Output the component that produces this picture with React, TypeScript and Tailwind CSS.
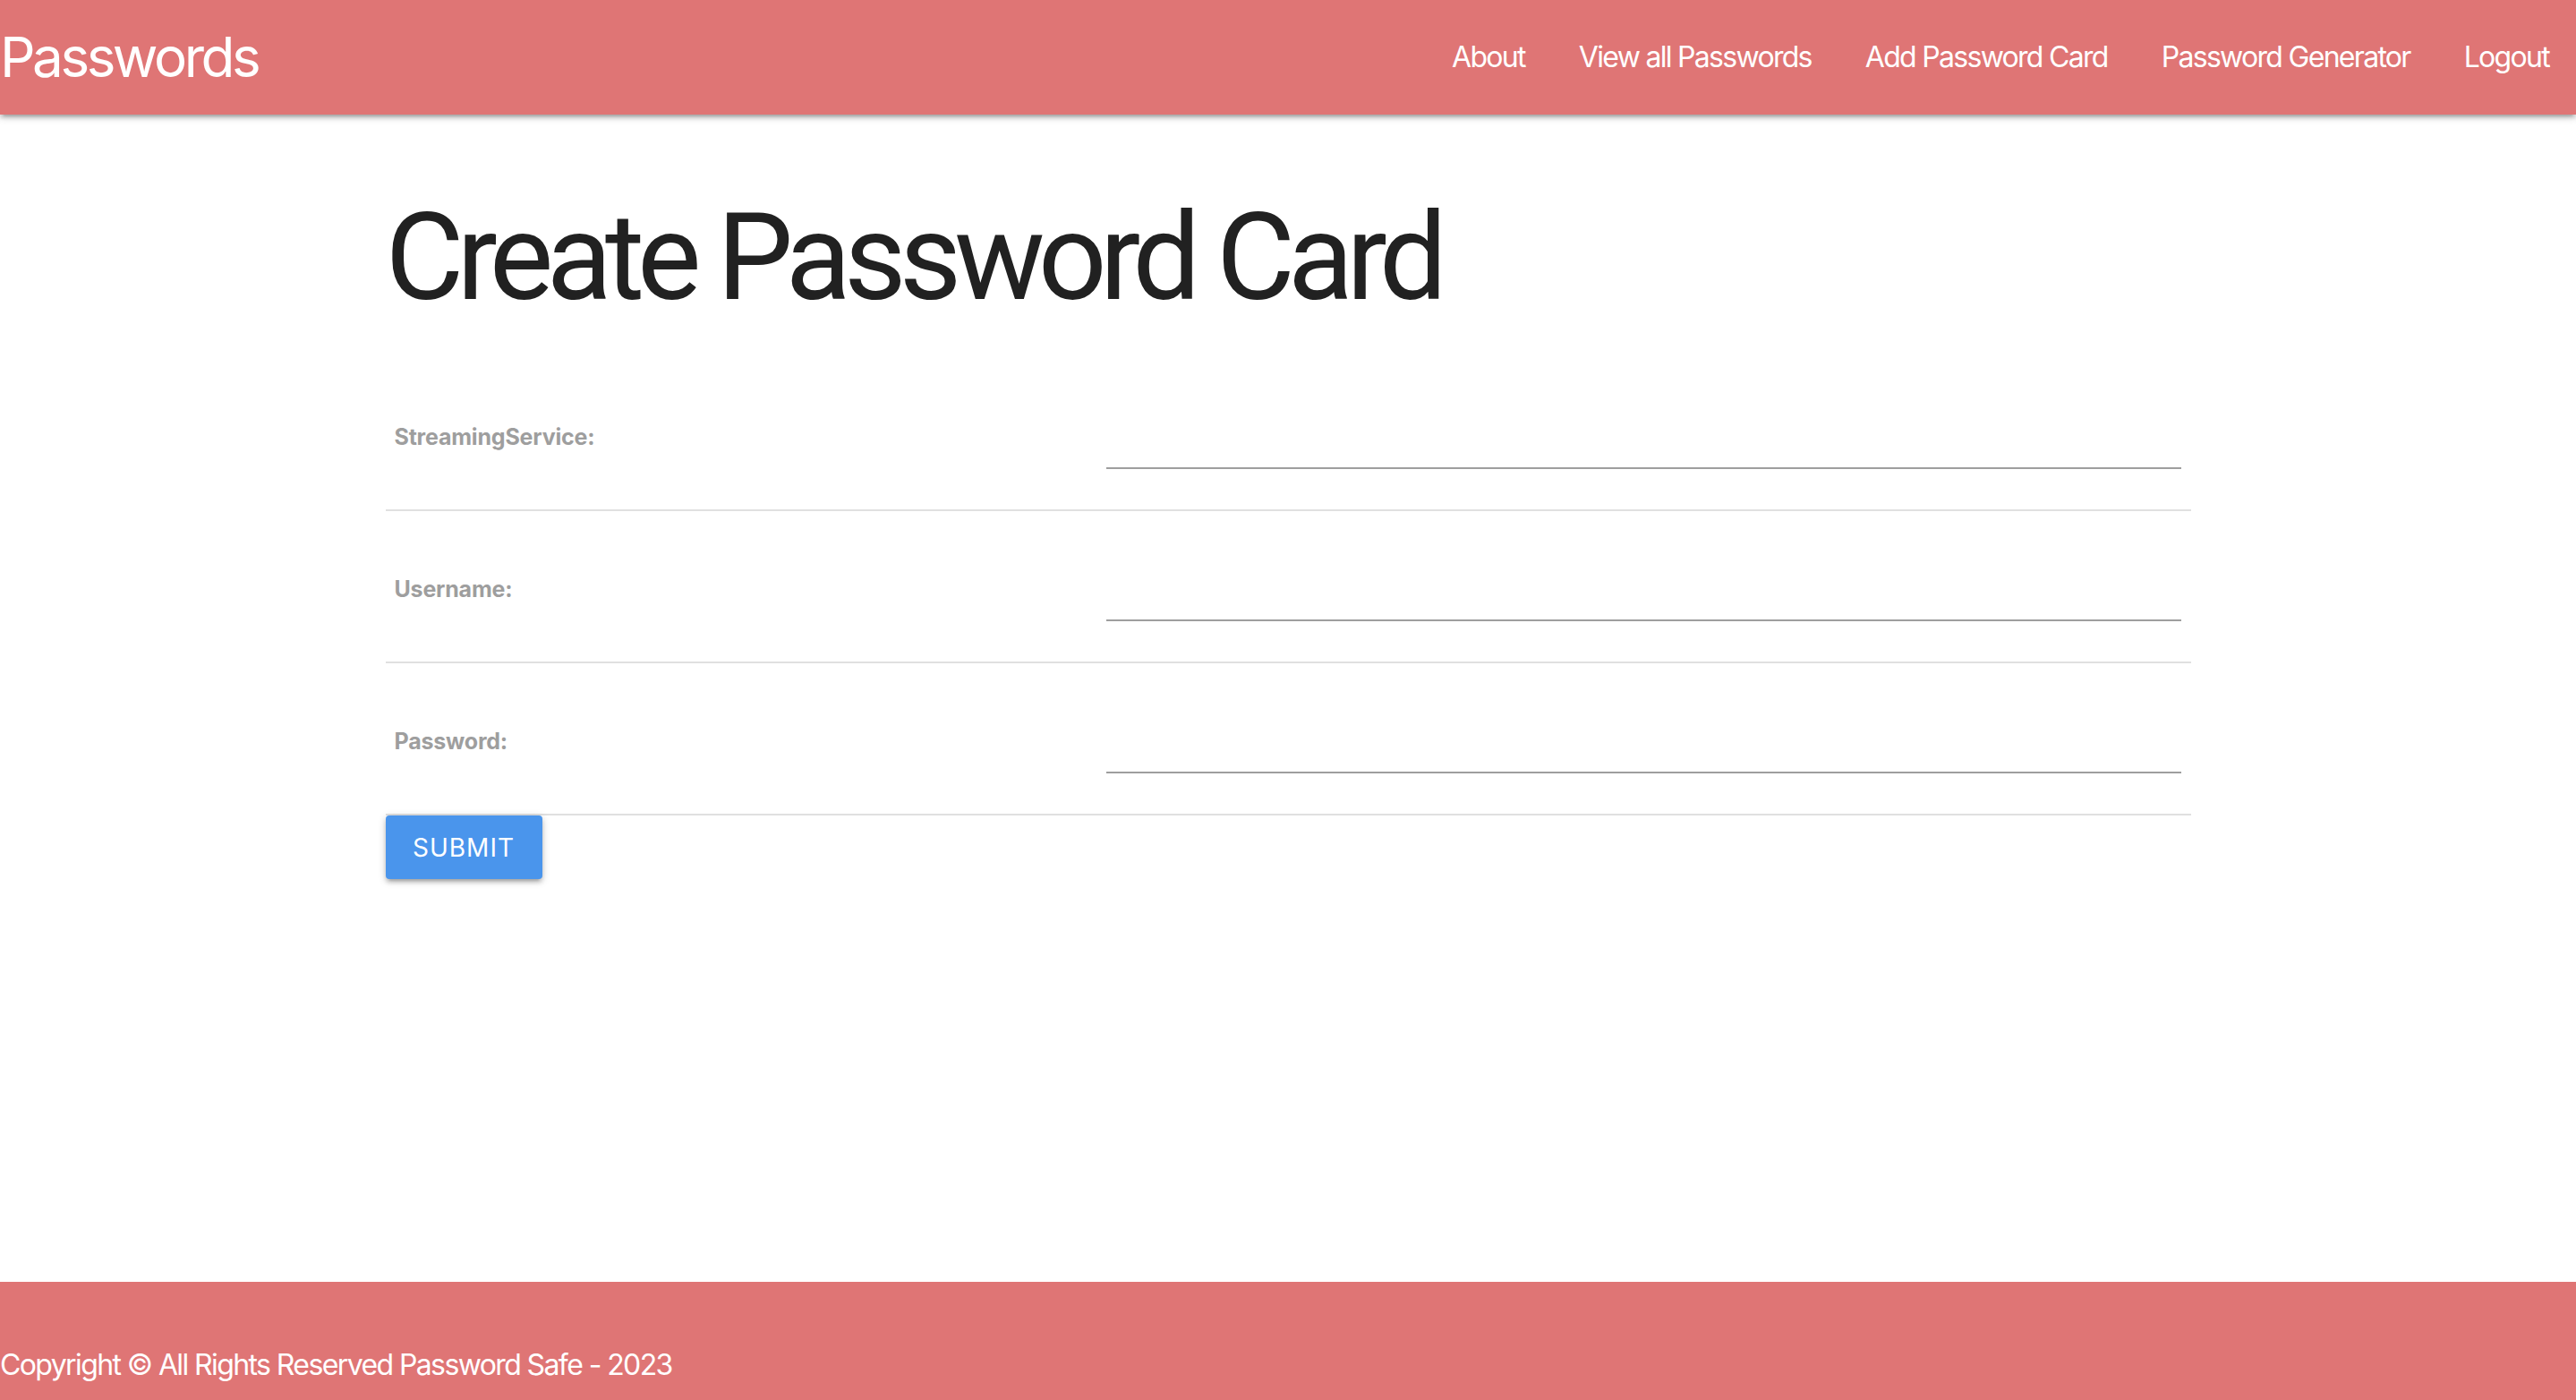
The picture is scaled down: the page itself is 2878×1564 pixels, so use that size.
import React from "react";

const navLinks = ["About", "View all Passwords", "Add Password Card", "Password Generator", "Logout"];
const fields = ["StreamingService:", "Username:", "Password:"];

export default function App() {
  return (
    <div
      className="min-h-screen flex flex-col bg-white"
      style={{ fontFamily: "Inter, 'Noto Sans', 'Liberation Sans', sans-serif" }}
    >
      <nav className="relative z-10 h-[128px] bg-[#df7575] flex items-center justify-between shadow-[0_4px_4px_0_rgba(0,0,0,0.14),0_6px_2px_-4px_rgba(0,0,0,0.12),0_2px_10px_0_rgba(0,0,0,0.2)]">
        <a className="text-white text-[62px] leading-none tracking-[-3.5px]">Passwords</a>
        <ul className="flex items-center">
          {navLinks.map((l) => (
            <li key={l} className="px-[30px] text-white text-[32px] leading-none tracking-[-1.7px]">
              {l}
            </li>
          ))}
        </ul>
      </nav>

      <main className="flex-1">
        <div className="w-[2017px] mx-auto">
          <h1
            className="mt-[87px] mb-[39px] text-[135px] leading-[147px] text-[#212121] tracking-[-8px]"
            style={{ fontFamily: "Roboto, Inter, 'Liberation Sans', sans-serif" }}
          >
            Create Password Card
          </h1>
          <div className="flex flex-col">
            {fields.map((f) => (
              <div key={f} className="h-[170px] border-b-2 border-[#e0e0e0] flex">
                <div className="w-[795px] pl-[10px] pt-[6px] flex items-center">
                  <label className="text-[25px] font-bold text-[#9e9e9e] leading-none tracking-[-0.2px]">{f}</label>
                </div>
                <div className="flex-1 pl-[10px] pr-[11px] flex flex-col justify-end pb-[45px]">
                  <input
                    type="text"
                    className="h-[98px] w-full border-b-2 border-[#9e9e9e] outline-none bg-transparent text-[32px]"
                  />
                </div>
              </div>
            ))}
          </div>
          <button className="mt-0 h-[71px] w-[175px] rounded-[4px] bg-[#4a95ec] text-white text-[28px] tracking-[1px] uppercase shadow-[0_4px_4px_0_rgba(0,0,0,0.14),0_6px_2px_-4px_rgba(0,0,0,0.12),0_2px_10px_0_rgba(0,0,0,0.2)]">
            Submit
          </button>
        </div>
      </main>

      <footer className="h-[132px] bg-[#df7575] flex items-end pb-[23px]">
        <p className="text-white text-[32px] leading-none tracking-[-1.6px]">
          Copyright © All Rights Reserved Password Safe - 2023
        </p>
      </footer>
    </div>
  );
}
